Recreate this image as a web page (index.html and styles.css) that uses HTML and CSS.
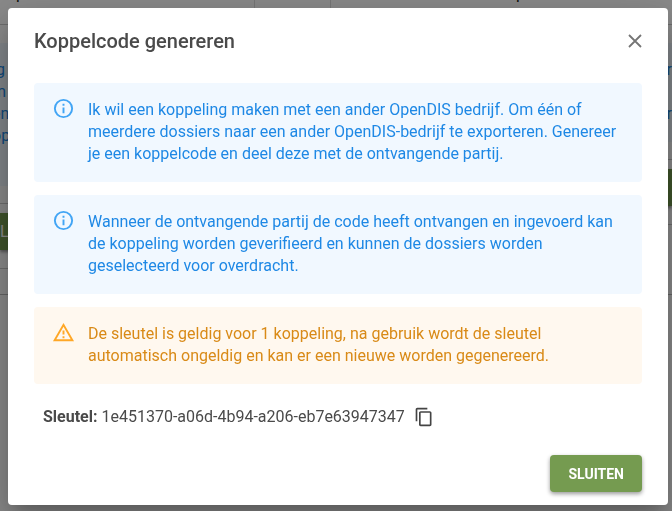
FILE: index.html
```html
<!DOCTYPE html>
<html lang="nl">
<head>
  <meta charset="UTF-8" />
  <title>Koppelcode genereren</title>
  <meta name="viewport" content="width=device-width, initial-scale=1.0" />
  <link rel="stylesheet" href="styles.css">
</head>
<body>
  <!-- pagina achter de dialoog -->
  <div class="backdrop" aria-hidden="true">
    <div class="cards">
      <div class="card card-left">
        <div class="card-title">p</div>
        <div class="card-info">&nbsp;g<br>m<br>en<br>op</div>
        <div class="card-actions"><span class="card-button">L</span></div>
      </div>
      <div class="gutter"></div>
      <div class="card card-right">
        <div class="card-title">p</div>
        <div class="card-info">r<br><br>r</div>
        <div class="card-actions"><span class="card-button"></span></div>
      </div>
    </div>
  </div>

  <div class="dialog" role="dialog" aria-modal="true" aria-labelledby="dialog-title">
    <div class="dialog-header">
      <h2 id="dialog-title">Koppelcode genereren</h2>
      <button class="icon-button close" type="button" aria-label="Sluiten">
        <svg viewBox="0 0 14 14" width="14" height="14"><path d="M1 1l12 12M13 1L1 13" fill="none" stroke="currentColor" stroke-width="1.8"/></svg>
      </button>
    </div>

    <div class="alert info">
      <svg class="alert-icon" viewBox="0 0 24 24"><path fill="currentColor" d="M11 7h2v2h-2zM11 11h2v6h-2zM12 2a10 10 0 1 0 0 20 10 10 0 0 0 0-20zm0 18a8 8 0 1 1 0-16 8 8 0 0 1 0 16z"/></svg>
      <p>Ik wil een koppeling maken met een ander OpenDIS bedrijf. Om één of meerdere dossiers naar een ander OpenDIS-bedrijf te exporteren. Genereer je een koppelcode en deel deze met de ontvangende partij.</p>
    </div>

    <div class="alert info">
      <svg class="alert-icon" viewBox="0 0 24 24"><path fill="currentColor" d="M11 7h2v2h-2zM11 11h2v6h-2zM12 2a10 10 0 1 0 0 20 10 10 0 0 0 0-20zm0 18a8 8 0 1 1 0-16 8 8 0 0 1 0 16z"/></svg>
      <p>Wanneer de ontvangende partij de code heeft ontvangen en ingevoerd kan de koppeling worden geverifieerd en kunnen de dossiers worden geselecteerd voor overdracht.</p>
    </div>

    <div class="alert warning">
      <svg class="alert-icon" viewBox="0 0 24 24"><path fill="currentColor" d="M12 5.99L19.53 19H4.47L12 5.99M12 2L1 21h22L12 2zM13 16h-2v2h2v-2zM13 10h-2v4h2v-4z"/></svg>
      <p>De sleutel is geldig voor 1 koppeling, na gebruik wordt de sleutel automatisch ongeldig en kan er een nieuwe worden gegenereerd.</p>
    </div>

    <div class="key">
      <span><strong>Sleutel:</strong> 1e451370-a06d-4b94-a206-eb7e63947347</span>
      <button class="icon-button copy" type="button" aria-label="Kopiëren">
        <svg viewBox="0 0 24 24" width="20" height="20"><path fill="currentColor" d="M16 1H4c-1.1 0-2 .9-2 2v14h2V3h12V1zm3 4H8c-1.1 0-2 .9-2 2v14c0 1.1.9 2 2 2h11c1.1 0 2-.9 2-2V7c0-1.1-.9-2-2-2zm0 16H8V7h11v14z"/></svg>
      </button>
    </div>

    <div class="dialog-actions">
      <button class="button" type="button">SLUITEN</button>
    </div>
  </div>
</body>
</html>
```

FILE: styles.css
```css
* {
  box-sizing: border-box;
}

body {
  margin: 0;
  padding: 8px 4px 6px 8px;
  font-family: Roboto, "Liberation Sans", sans-serif;
  font-size: 16px;
  line-height: 22px;
  color: #4a4a4a;
}

.backdrop {
  position: fixed;
  inset: 0;
  overflow: hidden;
  background: #fff;
}

.backdrop::after {
  content: "";
  position: absolute;
  inset: 0;
  background: rgba(0, 0, 0, 0.46);
}

.cards {
  display: grid;
  grid-template-columns: 254px 77px 1fr;
  height: 295px;
  border-bottom: 1px solid #bbb;
}

.gutter {
  border: solid #ddd;
  border-width: 0 1px;
}

.card-title {
  display: flex;
  align-items: flex-end;
  height: 25px;
  padding: 0 16px 19px;
  border-bottom: 1px solid #ccc;
  color: #111;
}

.card-right .card-title {
  justify-content: center;
  padding-left: 54px;
}

.card-info {
  height: 143px;
  margin-top: 18px;
  padding-top: 16px;
  background: #f0f8ff;
  color: #1e88e5;
}

.card-left .card-info {
  margin-left: -8px;
}

.card-right .card-info {
  height: 99px;
  text-align: right;
}

.card-actions {
  display: flex;
  height: 66px;
  margin-top: 17px;
  padding-top: 9px;
  border: solid #ccc;
  border-width: 1px 0;
}

.card-right .card-actions {
  justify-content: flex-end;
}

.card-button {
  width: 80px;
  height: 37px;
  line-height: 37px;
  background: #759b50;
  box-shadow: 0 2px 3px rgba(0, 0, 0, 0.4);
  color: #fff;
}

.dialog {
  position: relative;
  padding: 18px 26px 13px;
  border-radius: 4px;
  background: #fff;
  box-shadow: 0 11px 15px -7px rgba(0, 0, 0, 0.2),
    0 24px 38px 3px rgba(0, 0, 0, 0.14),
    0 9px 46px 8px rgba(0, 0, 0, 0.12);
}

.dialog-header {
  display: flex;
  align-items: center;
  justify-content: space-between;
  height: 30px;
  margin-bottom: 27px;
}

h2 {
  margin: 0;
  font-size: 20px;
  font-weight: 500;
}

.icon-button {
  display: flex;
  padding: 0;
  border: none;
  background: none;
  cursor: pointer;
}

.close {
  color: #757575;
}

.copy {
  color: #444;
}

.alert {
  display: flex;
  margin-bottom: 13px;
  padding: 16px 18px 17px;
  border-radius: 4px;
}

.alert p {
  flex: 1;
  margin: 0;
}

.alert-icon {
  width: 23px;
  height: 23px;
  margin-right: 13px;
  margin-top: -2px;
}

.info {
  background: #f1f8ff;
  color: #1e88e5;
}

.info .alert-icon {
  color: #42a5f5;
}

.warning {
  background: #fff8ef;
  color: #d98a17;
}

.warning .alert-icon {
  color: #ffa726;
}

.key {
  display: flex;
  align-items: center;
  gap: 9px;
  margin: 22px 9px 27px;
}

.dialog-actions {
  display: flex;
  justify-content: flex-end;
}

.button {
  height: 37px;
  padding: 0 18px;
  border: none;
  border-radius: 4px;
  background: #759b50;
  box-shadow: 0 2px 4px rgba(0, 0, 0, 0.4);
  color: #fff;
  font-family: inherit;
  font-size: 14px;
  font-weight: 700;
  cursor: pointer;
}
```
